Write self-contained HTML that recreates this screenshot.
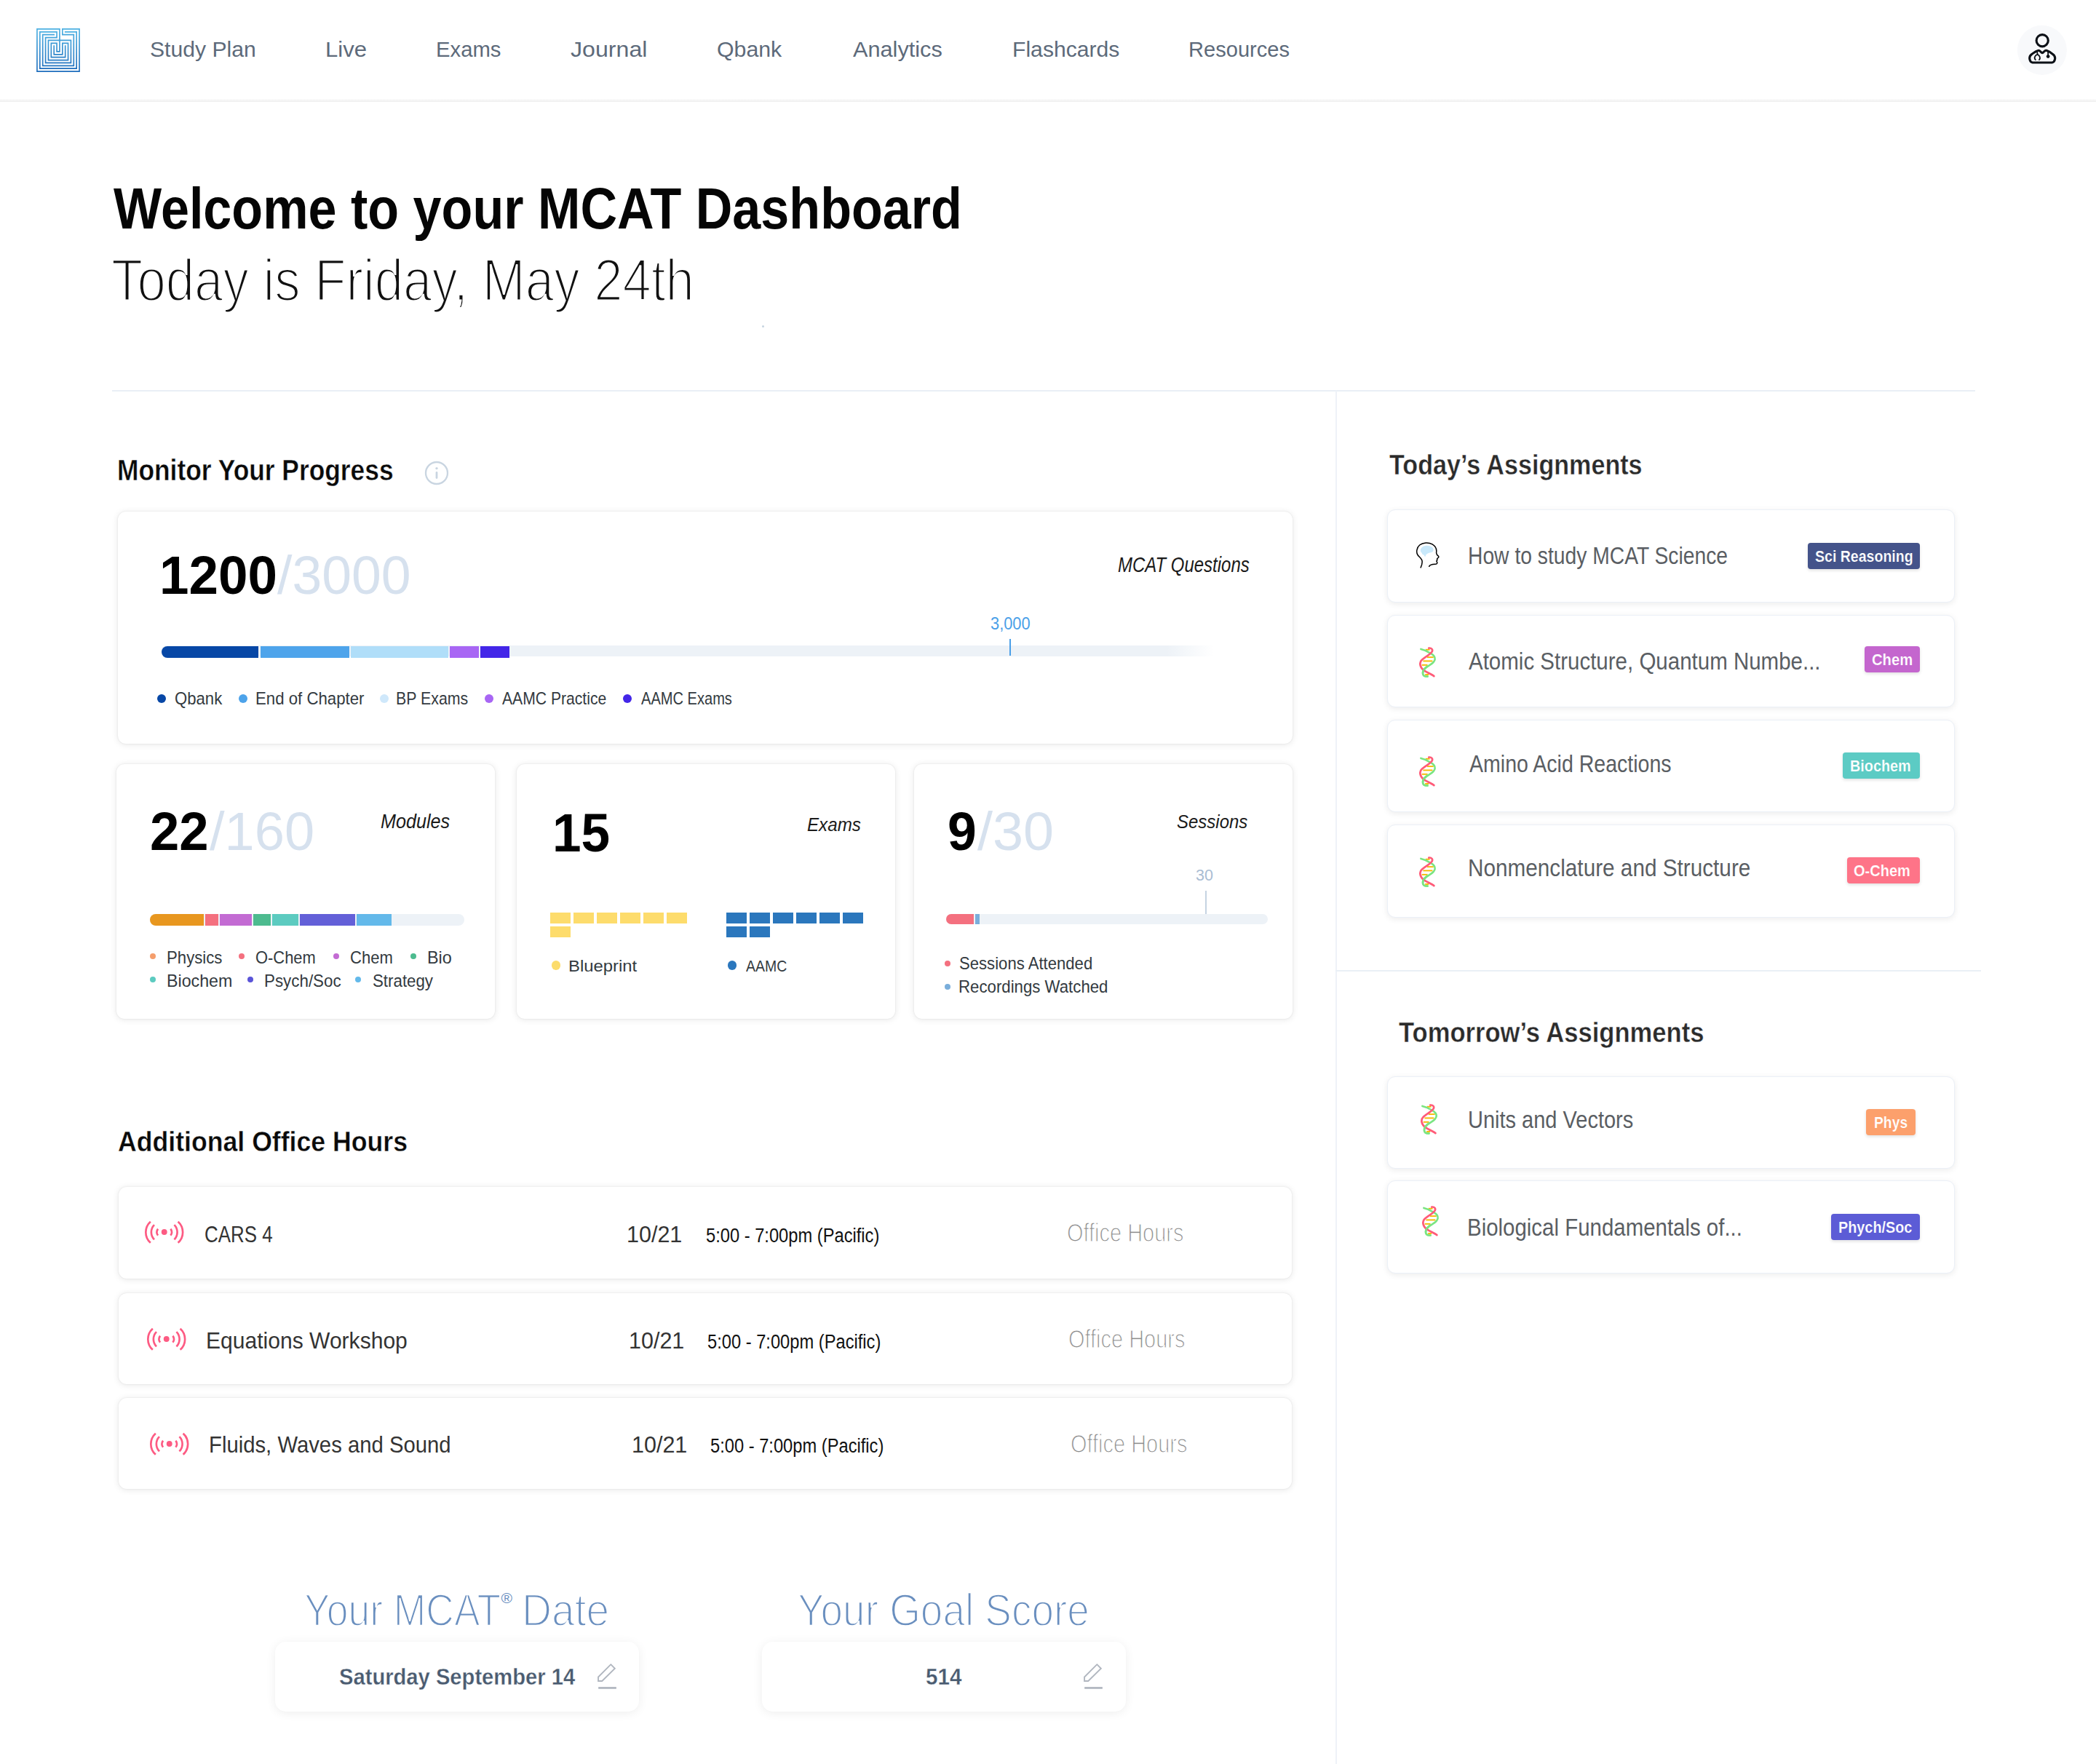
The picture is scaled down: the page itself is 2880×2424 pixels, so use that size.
<!DOCTYPE html>
<html><head><meta charset="utf-8"><title>MCAT Dashboard</title><style>
html,body{margin:0;padding:0;background:#fff;}
body{width:2880px;height:2424px;position:relative;overflow:hidden;font-family:"Liberation Sans",sans-serif;}
.t{position:absolute;white-space:nowrap;line-height:1;transform-origin:0 0;}
.lt{-webkit-text-stroke:0.036em #fff;}
.r{position:absolute;}
.card{position:absolute;background:#fff;box-shadow:0 0 2px rgba(0,0,0,0.1),0 1px 10px rgba(0,0,0,0.1);}
@media (max-width:2000px){html{zoom:0.5;}}
</style></head>
<body>
<div class="r" style="left:0.00px;top:136.00px;width:2880.00px;height:4.00px;background:linear-gradient(#fcfcfc,#eeeeee);"></div>
<div class="r" style="left:154.00px;top:536.00px;width:2560.00px;height:2.00px;background:#e9eff6;"></div>
<div class="r" style="left:1834.50px;top:537.00px;width:2.00px;height:1887.00px;background:#eef2f8;"></div>
<div class="r" style="left:1835.00px;top:1332.50px;width:887.00px;height:2.00px;background:#eaf0f6;"></div>
<div class="card" style="left:161.50px;top:702.50px;width:1614.50px;height:319.00px;border-radius:11px;"></div>
<div class="r" style="left:222.00px;top:886.50px;width:1446.00px;height:15.50px;background:linear-gradient(90deg,#edf2f7 0%,#edf2f7 95.5%,rgba(237,242,247,0) 100%);border-radius:8px 0 0 8px;"></div>
<div class="r" style="left:222.00px;top:888.00px;width:133.40px;height:16.00px;background:#0747a6;border-radius:8px 0 0 8px;"></div>
<div class="r" style="left:357.50px;top:888.00px;width:122.30px;height:16.00px;background:#4ea4eb;"></div>
<div class="r" style="left:482.00px;top:888.00px;width:134.00px;height:16.00px;background:#b0def9;"></div>
<div class="r" style="left:618.00px;top:888.00px;width:39.80px;height:16.00px;background:#a866f4;"></div>
<div class="r" style="left:660.00px;top:888.00px;width:40.00px;height:16.00px;background:#4326e8;"></div>
<div class="r" style="left:1386.80px;top:877.50px;width:2.00px;height:23.50px;background:#4a9fe8;"></div>
<div class="r" style="left:216.00px;top:954.00px;width:12px;height:12px;border-radius:50%;background:#0747a6"></div>
<div class="r" style="left:328.00px;top:954.00px;width:12px;height:12px;border-radius:50%;background:#4da3ea"></div>
<div class="r" style="left:521.80px;top:954.00px;width:12px;height:12px;border-radius:50%;background:#cfe8fb"></div>
<div class="r" style="left:666.00px;top:954.00px;width:12px;height:12px;border-radius:50%;background:#a866f4"></div>
<div class="r" style="left:856.00px;top:954.00px;width:12px;height:12px;border-radius:50%;background:#4326e8"></div>
<div class="card" style="left:160.00px;top:1050.00px;width:520.00px;height:350.00px;border-radius:11px;"></div>
<div class="card" style="left:710.00px;top:1050.00px;width:520.00px;height:350.00px;border-radius:11px;"></div>
<div class="card" style="left:1256.00px;top:1050.00px;width:520.00px;height:350.00px;border-radius:11px;"></div>
<div class="r" style="left:206.00px;top:1256.30px;width:431.50px;height:15.50px;background:#edf2f7;border-radius:8px;"></div>
<div class="r" style="left:206.00px;top:1256.30px;width:73.70px;height:15.50px;background:#e8971f;border-radius:8px 0 0 8px;"></div>
<div class="r" style="left:282.00px;top:1256.30px;width:17.80px;height:15.50px;background:#f4707f;"></div>
<div class="r" style="left:302.00px;top:1256.30px;width:43.70px;height:15.50px;background:#c36bd3;"></div>
<div class="r" style="left:348.00px;top:1256.30px;width:24.00px;height:15.50px;background:#4dbb8f;"></div>
<div class="r" style="left:374.30px;top:1256.30px;width:35.50px;height:15.50px;background:#5ccbc0;"></div>
<div class="r" style="left:412.00px;top:1256.30px;width:75.80px;height:15.50px;background:#6360d8;"></div>
<div class="r" style="left:490.30px;top:1256.30px;width:47.70px;height:15.50px;background:#63b9ea;"></div>
<div class="r" style="left:206.00px;top:1310.00px;width:8px;height:8px;border-radius:50%;background:#f59e6c"></div>
<div class="r" style="left:327.80px;top:1310.00px;width:8px;height:8px;border-radius:50%;background:#f4707f"></div>
<div class="r" style="left:458.00px;top:1310.00px;width:8px;height:8px;border-radius:50%;background:#c36bd3"></div>
<div class="r" style="left:564.00px;top:1310.00px;width:8px;height:8px;border-radius:50%;background:#4dbb8f"></div>
<div class="r" style="left:206.00px;top:1342.00px;width:8px;height:8px;border-radius:50%;background:#5ccbc0"></div>
<div class="r" style="left:339.80px;top:1342.00px;width:8px;height:8px;border-radius:50%;background:#5a54d8"></div>
<div class="r" style="left:488.00px;top:1342.00px;width:8px;height:8px;border-radius:50%;background:#63b9ea"></div>
<div class="r" style="left:756.00px;top:1254.00px;width:28.00px;height:14.60px;background:#fddc6c;"></div>
<div class="r" style="left:998.00px;top:1254.00px;width:28.00px;height:14.60px;background:#2b77bd;"></div>
<div class="r" style="left:788.00px;top:1254.00px;width:28.00px;height:14.60px;background:#fddc6c;"></div>
<div class="r" style="left:1030.00px;top:1254.00px;width:28.00px;height:14.60px;background:#2b77bd;"></div>
<div class="r" style="left:820.00px;top:1254.00px;width:28.00px;height:14.60px;background:#fddc6c;"></div>
<div class="r" style="left:1062.00px;top:1254.00px;width:28.00px;height:14.60px;background:#2b77bd;"></div>
<div class="r" style="left:852.00px;top:1254.00px;width:28.00px;height:14.60px;background:#fddc6c;"></div>
<div class="r" style="left:1094.00px;top:1254.00px;width:28.00px;height:14.60px;background:#2b77bd;"></div>
<div class="r" style="left:884.00px;top:1254.00px;width:28.00px;height:14.60px;background:#fddc6c;"></div>
<div class="r" style="left:1126.00px;top:1254.00px;width:28.00px;height:14.60px;background:#2b77bd;"></div>
<div class="r" style="left:916.00px;top:1254.00px;width:28.00px;height:14.60px;background:#fddc6c;"></div>
<div class="r" style="left:1158.00px;top:1254.00px;width:28.00px;height:14.60px;background:#2b77bd;"></div>
<div class="r" style="left:756.00px;top:1273.00px;width:28.00px;height:14.80px;background:#fddc6c;"></div>
<div class="r" style="left:998.00px;top:1273.00px;width:28.00px;height:14.80px;background:#2b77bd;"></div>
<div class="r" style="left:1030.00px;top:1273.00px;width:28.00px;height:14.80px;background:#2b77bd;"></div>
<div class="r" style="left:757.75px;top:1320.35px;width:12.5px;height:12.5px;border-radius:50%;background:#fcdc6b"></div>
<div class="r" style="left:999.75px;top:1320.35px;width:12.5px;height:12.5px;border-radius:50%;background:#2b77bd"></div>
<div class="r" style="left:1656.00px;top:1224.00px;width:2.00px;height:33.00px;background:#c5d3e2;"></div>
<div class="r" style="left:1300.00px;top:1256.30px;width:441.70px;height:13.70px;background:#edf2f7;border-radius:8px;"></div>
<div class="r" style="left:1300.00px;top:1256.30px;width:38.00px;height:13.70px;background:#f4707f;border-radius:8px 0 0 8px;"></div>
<div class="r" style="left:1339.60px;top:1256.30px;width:6.40px;height:13.70px;background:#7aaedb;"></div>
<div class="r" style="left:1298.00px;top:1320.00px;width:8px;height:8px;border-radius:50%;background:#f4707f"></div>
<div class="r" style="left:1298.00px;top:1352.00px;width:8px;height:8px;border-radius:50%;background:#7aaedb"></div>
<div class="card" style="left:162.60px;top:1630.50px;width:1612.70px;height:126.00px;border-radius:11px;"></div>
<div class="card" style="left:162.60px;top:1777.00px;width:1612.70px;height:125.40px;border-radius:11px;"></div>
<div class="card" style="left:162.60px;top:1921.30px;width:1612.70px;height:125.10px;border-radius:11px;"></div>
<div class="card" style="left:378.20px;top:2256.20px;width:500.00px;height:95.50px;border-radius:15px;box-shadow:0 2px 14px rgba(0,0,0,0.07);"></div>
<div class="card" style="left:1047.10px;top:2256.20px;width:500.00px;height:95.50px;border-radius:15px;box-shadow:0 2px 14px rgba(0,0,0,0.07);"></div>
<div class="card" style="left:1905.70px;top:700.00px;width:780.30px;height:128.00px;border-radius:11px;border:1.5px solid #ebf0f7;box-sizing:border-box;box-shadow:0 2px 8px rgba(0,0,0,0.08);"></div>
<div class="card" style="left:1905.70px;top:844.50px;width:780.30px;height:127.50px;border-radius:11px;border:1.5px solid #ebf0f7;box-sizing:border-box;box-shadow:0 2px 8px rgba(0,0,0,0.08);"></div>
<div class="card" style="left:1905.70px;top:988.50px;width:780.30px;height:127.50px;border-radius:11px;border:1.5px solid #ebf0f7;box-sizing:border-box;box-shadow:0 2px 8px rgba(0,0,0,0.08);"></div>
<div class="card" style="left:1905.70px;top:1132.50px;width:780.30px;height:128.00px;border-radius:11px;border:1.5px solid #ebf0f7;box-sizing:border-box;box-shadow:0 2px 8px rgba(0,0,0,0.08);"></div>
<div class="card" style="left:1905.70px;top:1478.50px;width:780.30px;height:127.50px;border-radius:11px;border:1.5px solid #ebf0f7;box-sizing:border-box;box-shadow:0 2px 8px rgba(0,0,0,0.08);"></div>
<div class="card" style="left:1905.70px;top:1622.00px;width:780.30px;height:128.00px;border-radius:11px;border:1.5px solid #ebf0f7;box-sizing:border-box;box-shadow:0 2px 8px rgba(0,0,0,0.08);"></div>
<div class="r" style="left:2484.20px;top:746.00px;width:153.80px;height:35.80px;background:#44538a;border-radius:4px;box-shadow:0 2px 4px rgba(0,0,0,0.12)"></div>
<div class="r" style="left:2562.00px;top:888.10px;width:75.90px;height:35.80px;background:#c466ce;border-radius:4px;box-shadow:0 2px 4px rgba(0,0,0,0.12)"></div>
<div class="r" style="left:2532.10px;top:1034.00px;width:105.80px;height:35.80px;background:#5ccbc4;border-radius:4px;box-shadow:0 2px 4px rgba(0,0,0,0.12)"></div>
<div class="r" style="left:2538.10px;top:1178.00px;width:99.80px;height:35.90px;background:#fe7488;border-radius:4px;box-shadow:0 2px 4px rgba(0,0,0,0.12)"></div>
<div class="r" style="left:2564.20px;top:1524.10px;width:67.70px;height:35.90px;background:#fca06c;border-radius:4px;box-shadow:0 2px 4px rgba(0,0,0,0.12)"></div>
<div class="r" style="left:2516.10px;top:1668.00px;width:121.70px;height:35.80px;background:#5c5cd6;border-radius:4px;box-shadow:0 2px 4px rgba(0,0,0,0.12)"></div>
<svg class="r" style="left:49px;top:37.6px" width="62" height="62" viewBox="-0.5 -0.5 16 16">
<defs><linearGradient id="lg" x1="0" y1="0" x2="0" y2="1"><stop offset="0" stop-color="#4cb0e2"/><stop offset="1" stop-color="#1c6cbc"/></linearGradient></defs>
<g fill="none" stroke="url(#lg)" stroke-width="0.42" stroke-linejoin="miter" stroke-linecap="square">
<path d="M6,2 H2 V13 H13 V2 H9 V0 H15 V15 H0 V0 H8 V8 H7 V5 H5 V10 H10 V6"/>
<path d="M10,1 H14 V14 H1 V1 H7 V3 H3 V12 H12 V4 H4 V11 H11 V5 H9 V9 H6 V6"/>
</g></svg>
<svg class="r" style="left:2760px;top:20px" width="100" height="100" viewBox="0 0 1764 1764">
<circle cx="810" cy="862" r="600" fill="#f8f9fb"/>
<g fill="none" stroke="#0d1117" stroke-width="55" stroke-linecap="round" stroke-linejoin="round">
<circle cx="815" cy="630" r="143"/>
<path d="M580 1165 H1050 C1120 1150 1160 1030 1075 965 C1025 925 970 890 925 875 C905 868 880 875 860 895 L835 920 C822 933 808 933 795 920 L770 895 C750 875 725 868 705 875 C660 890 605 925 555 965 C470 1030 510 1150 580 1165 Z"/>
</g>
<g fill="none" stroke="#0d1117" stroke-width="32" stroke-linecap="round">
<path d="M690 905 L700 965"/>
<path d="M650 1095 C610 1060 630 990 695 970 C760 990 775 1060 740 1095"/>
<path d="M955 905 V1005"/>
</g>
<circle cx="955" cy="1015" r="42" fill="#0d1117"/>
</svg>
<svg class="r" style="left:580px;top:630.3px" width="40" height="40" viewBox="0 0 40 40">
<circle cx="20" cy="20" r="15" fill="none" stroke="#c9d5e1" stroke-width="2.3"/>
<circle cx="20" cy="13.6" r="1.7" fill="#c9d5e1"/>
<line x1="20" y1="19.5" x2="20" y2="26.5" stroke="#c9d5e1" stroke-width="2.8" stroke-linecap="round"/>
</svg>
<svg class="r" style="left:190px;top:1668px" width="72" height="50" viewBox="0 0 2096 1456">
<g fill="none" stroke="#fd5b83" stroke-width="78"><path d="M490 310 A570 570 0 0 0 490 1160"/><path d="M1590 310 A570 570 0 0 1 1590 1160"/><path d="M640 440 A422 422 0 0 0 640 1030"/><path d="M1440 440 A422 422 0 0 1 1440 1030"/><path d="M790 605 A190 190 0 0 0 790 865"/><path d="M1290 605 A190 190 0 0 1 1290 865"/></g>
<circle cx="1040" cy="730" r="115" fill="#fd5b83"/></svg>
<svg class="r" style="left:192.5px;top:1814.5px" width="72" height="50" viewBox="0 0 2096 1456">
<g fill="none" stroke="#fd5b83" stroke-width="78"><path d="M490 310 A570 570 0 0 0 490 1160"/><path d="M1590 310 A570 570 0 0 1 1590 1160"/><path d="M640 440 A422 422 0 0 0 640 1030"/><path d="M1440 440 A422 422 0 0 1 1440 1030"/><path d="M790 605 A190 190 0 0 0 790 865"/><path d="M1290 605 A190 190 0 0 1 1290 865"/></g>
<circle cx="1040" cy="730" r="115" fill="#fd5b83"/></svg>
<svg class="r" style="left:196.5px;top:1959px" width="72" height="50" viewBox="0 0 2096 1456">
<g fill="none" stroke="#fd5b83" stroke-width="78"><path d="M490 310 A570 570 0 0 0 490 1160"/><path d="M1590 310 A570 570 0 0 1 1590 1160"/><path d="M640 440 A422 422 0 0 0 640 1030"/><path d="M1440 440 A422 422 0 0 1 1440 1030"/><path d="M790 605 A190 190 0 0 0 790 865"/><path d="M1290 605 A190 190 0 0 1 1290 865"/></g>
<circle cx="1040" cy="730" r="115" fill="#fd5b83"/></svg>
<svg class="r" style="left:810px;top:2278px" width="50" height="50" viewBox="0 0 1764 1764">
<path d="M425 935 L1035 325 L1230 520 L610 1130 L425 1130 Z" fill="none" stroke="#b0b6bf" stroke-width="65" stroke-linejoin="miter"/>
<rect x="430" y="1415" width="870" height="95" fill="#b0b6bf"/></svg>
<svg class="r" style="left:1478.4px;top:2278px" width="50" height="50" viewBox="0 0 1764 1764">
<path d="M425 935 L1035 325 L1230 520 L610 1130 L425 1130 Z" fill="none" stroke="#b0b6bf" stroke-width="65" stroke-linejoin="miter"/>
<rect x="430" y="1415" width="870" height="95" fill="#b0b6bf"/></svg>
<svg class="r" style="left:1935px;top:735px" width="55" height="55" viewBox="0 0 1764 1764">
<path d="M540 700 C530 600 620 500 760 480 C880 465 1000 490 1070 560 C1120 610 1120 700 1080 740 C1040 780 960 790 900 800 C850 810 800 860 770 880 L770 950 L710 950 L700 880 C650 880 600 850 600 790 C570 780 540 750 540 700 Z" fill="#c9e9fb"/>
<path d="M550 1440 C600 1330 640 1220 600 1110 C560 1010 480 970 420 890 C340 780 370 560 500 450 C640 330 900 320 1060 410 C1200 490 1260 620 1240 760 C1230 830 1260 880 1310 920 C1360 960 1350 990 1300 1020 C1270 1040 1260 1070 1280 1110 C1250 1130 1230 1160 1270 1200 C1290 1250 1260 1290 1180 1290 C1050 1290 960 1300 920 1390" fill="none" stroke="#000" stroke-width="48" stroke-linecap="round" stroke-linejoin="round"/>
</svg>
<svg class="r" style="left:1935px;top:880px" width="55" height="60" viewBox="0 0 1617 1764">
<g stroke="#f5b800" stroke-width="55"><path d="M700 375 H870"/><path d="M760 680 H1020"/><path d="M600 835 H980"/><path d="M550 995 H780"/><path d="M680 1380 H830"/></g>
<path d="M510 350 C650 380 780 430 900 520 C1180 680 1100 850 880 990 C700 1100 560 1200 590 1350 C610 1450 700 1460 780 1455" fill="none" stroke="#7ae582" stroke-width="75" stroke-linecap="round"/>
<path d="M830 310 C950 300 1010 380 950 470 C850 600 700 650 560 780 C430 900 470 1080 620 1200 C760 1300 950 1370 1040 1445" fill="none" stroke="#ff5b78" stroke-width="80" stroke-linecap="round"/>
<path d="M760 1050 C640 1130 570 1220 590 1350 C610 1450 700 1460 780 1455" fill="none" stroke="#7ae582" stroke-width="75" stroke-linecap="round"/>
</svg>
<svg class="r" style="left:1935px;top:1030.4px" width="55" height="60" viewBox="0 0 1617 1764">
<g stroke="#f5b800" stroke-width="55"><path d="M700 375 H870"/><path d="M760 680 H1020"/><path d="M600 835 H980"/><path d="M550 995 H780"/><path d="M680 1380 H830"/></g>
<path d="M510 350 C650 380 780 430 900 520 C1180 680 1100 850 880 990 C700 1100 560 1200 590 1350 C610 1450 700 1460 780 1455" fill="none" stroke="#7ae582" stroke-width="75" stroke-linecap="round"/>
<path d="M830 310 C950 300 1010 380 950 470 C850 600 700 650 560 780 C430 900 470 1080 620 1200 C760 1300 950 1370 1040 1445" fill="none" stroke="#ff5b78" stroke-width="80" stroke-linecap="round"/>
<path d="M760 1050 C640 1130 570 1220 590 1350 C610 1450 700 1460 780 1455" fill="none" stroke="#7ae582" stroke-width="75" stroke-linecap="round"/>
</svg>
<svg class="r" style="left:1935px;top:1168px" width="55" height="60" viewBox="0 0 1617 1764">
<g stroke="#f5b800" stroke-width="55"><path d="M700 375 H870"/><path d="M760 680 H1020"/><path d="M600 835 H980"/><path d="M550 995 H780"/><path d="M680 1380 H830"/></g>
<path d="M510 350 C650 380 780 430 900 520 C1180 680 1100 850 880 990 C700 1100 560 1200 590 1350 C610 1450 700 1460 780 1455" fill="none" stroke="#7ae582" stroke-width="75" stroke-linecap="round"/>
<path d="M830 310 C950 300 1010 380 950 470 C850 600 700 650 560 780 C430 900 470 1080 620 1200 C760 1300 950 1370 1040 1445" fill="none" stroke="#ff5b78" stroke-width="80" stroke-linecap="round"/>
<path d="M760 1050 C640 1130 570 1220 590 1350 C610 1450 700 1460 780 1455" fill="none" stroke="#7ae582" stroke-width="75" stroke-linecap="round"/>
</svg>
<svg class="r" style="left:1937px;top:1508.2px" width="55" height="60" viewBox="0 0 1617 1764">
<g stroke="#f5b800" stroke-width="55"><path d="M700 375 H870"/><path d="M760 680 H1020"/><path d="M600 835 H980"/><path d="M550 995 H780"/><path d="M680 1380 H830"/></g>
<path d="M510 350 C650 380 780 430 900 520 C1180 680 1100 850 880 990 C700 1100 560 1200 590 1350 C610 1450 700 1460 780 1455" fill="none" stroke="#7ae582" stroke-width="75" stroke-linecap="round"/>
<path d="M830 310 C950 300 1010 380 950 470 C850 600 700 650 560 780 C430 900 470 1080 620 1200 C760 1300 950 1370 1040 1445" fill="none" stroke="#ff5b78" stroke-width="80" stroke-linecap="round"/>
<path d="M760 1050 C640 1130 570 1220 590 1350 C610 1450 700 1460 780 1455" fill="none" stroke="#7ae582" stroke-width="75" stroke-linecap="round"/>
</svg>
<svg class="r" style="left:1939px;top:1648px" width="55" height="60" viewBox="0 0 1617 1764">
<g stroke="#f5b800" stroke-width="55"><path d="M700 375 H870"/><path d="M760 680 H1020"/><path d="M600 835 H980"/><path d="M550 995 H780"/><path d="M680 1380 H830"/></g>
<path d="M510 350 C650 380 780 430 900 520 C1180 680 1100 850 880 990 C700 1100 560 1200 590 1350 C610 1450 700 1460 780 1455" fill="none" stroke="#7ae582" stroke-width="75" stroke-linecap="round"/>
<path d="M830 310 C950 300 1010 380 950 470 C850 600 700 650 560 780 C430 900 470 1080 620 1200 C760 1300 950 1370 1040 1445" fill="none" stroke="#ff5b78" stroke-width="80" stroke-linecap="round"/>
<path d="M760 1050 C640 1130 570 1220 590 1350 C610 1450 700 1460 780 1455" fill="none" stroke="#7ae582" stroke-width="75" stroke-linecap="round"/>
</svg>
<div class="t" style="left:206.24px;top:53.35px;font-size:29.94px;color:#5d6a7a;transform:scaleX(1.0070);">Study Plan</div>
<div class="t" style="left:446.92px;top:53.35px;font-size:29.94px;color:#5d6a7a;transform:scaleX(1.0385);">Live</div>
<div class="t" style="left:598.80px;top:53.35px;font-size:29.94px;color:#5d6a7a;transform:scaleX(0.9773);">Exams</div>
<div class="t" style="left:784.18px;top:53.35px;font-size:29.94px;color:#5d6a7a;transform:scaleX(1.0737);">Journal</div>
<div class="t" style="left:984.74px;top:53.35px;font-size:29.94px;color:#5d6a7a;transform:scaleX(1.0115);">Qbank</div>
<div class="t" style="left:1172.00px;top:53.35px;font-size:29.94px;color:#5d6a7a;transform:scaleX(1.0252);">Analytics</div>
<div class="t" style="left:1390.74px;top:53.35px;font-size:29.94px;color:#5d6a7a;transform:scaleX(1.0070);">Flashcards</div>
<div class="t" style="left:1633.06px;top:53.35px;font-size:29.94px;color:#5d6a7a;transform:scaleX(0.9714);">Resources</div>
<div class="t" style="left:156.00px;top:247.44px;font-size:79.22px;color:#050505;font-weight:700;transform:scaleX(0.8849);">Welcome to your MCAT Dashboard</div>
<div class="t lt" style="left:153.00px;top:344.27px;font-size:81.75px;color:#111;transform:scaleX(0.8655);">Today is Friday, May 24th</div>
<div class="t" style="left:161.28px;top:627.24px;font-size:40.12px;color:#0a0a0a;font-weight:700;transform:scaleX(0.8809);-webkit-text-stroke:0.01em #fff;">Monitor Your Progress</div>
<div class="t" style="left:218.66px;top:753.14px;font-size:74.85px;color:#000;font-weight:700;transform:scaleX(0.9728);">1200</div>
<div class="t" style="left:380.70px;top:753.14px;font-size:74.85px;color:#d6e1ee;transform:scaleX(0.9800);">/3000</div>
<div class="t" style="left:1535.68px;top:761.89px;font-size:29.07px;color:#1a1a1a;font-style:italic;transform:scaleX(0.8249);">MCAT Questions</div>
<div class="t" style="left:1360.67px;top:845.57px;font-size:23.55px;color:#4a9fe8;transform:scaleX(0.9263);">3,000</div>
<div class="t" style="left:239.60px;top:947.58px;font-size:24.71px;color:#333a40;transform:scaleX(0.8958);">Qbank</div>
<div class="t" style="left:351.20px;top:947.58px;font-size:24.71px;color:#333a40;transform:scaleX(0.8994);">End of Chapter</div>
<div class="t" style="left:544.17px;top:947.58px;font-size:24.71px;color:#333a40;transform:scaleX(0.8634);">BP Exams</div>
<div class="t" style="left:689.50px;top:947.58px;font-size:24.71px;color:#333a40;transform:scaleX(0.8554);">AAMC Practice</div>
<div class="t" style="left:880.60px;top:947.58px;font-size:24.71px;color:#333a40;transform:scaleX(0.8124);">AAMC Exams</div>
<div class="t" style="left:206.39px;top:1105.14px;font-size:74.85px;color:#000;font-weight:700;transform:scaleX(0.9692);">22</div>
<div class="t" style="left:288.20px;top:1105.14px;font-size:74.85px;color:#d6e1ee;transform:scaleX(0.9888);">/160</div>
<div class="t" style="left:522.77px;top:1115.49px;font-size:27.18px;color:#1a1a1a;font-style:italic;transform:scaleX(0.9267);">Modules</div>
<div class="t" style="left:229.09px;top:1304.81px;font-size:23.26px;color:#333a40;transform:scaleX(0.9545);">Physics</div>
<div class="t" style="left:351.26px;top:1304.81px;font-size:23.26px;color:#333a40;transform:scaleX(0.9424);">O-Chem</div>
<div class="t" style="left:481.35px;top:1304.81px;font-size:23.26px;color:#333a40;transform:scaleX(0.9483);">Chem</div>
<div class="t" style="left:586.89px;top:1304.81px;font-size:23.26px;color:#333a40;transform:scaleX(1.0065);">Bio</div>
<div class="t" style="left:228.80px;top:1336.81px;font-size:23.26px;color:#333a40;transform:scaleX(0.9989);">Biochem</div>
<div class="t" style="left:362.88px;top:1336.81px;font-size:23.26px;color:#333a40;transform:scaleX(0.9617);">Psych/Soc</div>
<div class="t" style="left:511.54px;top:1336.81px;font-size:23.26px;color:#333a40;transform:scaleX(0.9588);">Strategy</div>
<div class="t" style="left:759.28px;top:1108.00px;font-size:73.84px;color:#000;font-weight:700;transform:scaleX(0.9640);">15</div>
<div class="t" style="left:1109.49px;top:1119.61px;font-size:26.45px;color:#1a1a1a;font-style:italic;transform:scaleX(0.9139);">Exams</div>
<div class="t" style="left:780.91px;top:1315.68px;font-size:22.82px;color:#333a40;transform:scaleX(1.0455);">Blueprint</div>
<div class="t" style="left:1024.50px;top:1315.68px;font-size:22.82px;color:#333a40;transform:scaleX(0.8538);">AAMC</div>
<div class="t" style="left:1302.18px;top:1105.14px;font-size:74.85px;color:#000;font-weight:700;transform:scaleX(0.9556);">9</div>
<div class="t" style="left:1343.00px;top:1105.14px;font-size:74.85px;color:#d6e1ee;transform:scaleX(1.0099);">/30</div>
<div class="t" style="left:1617.38px;top:1115.85px;font-size:26.16px;color:#1a1a1a;font-style:italic;transform:scaleX(0.9173);">Sessions</div>
<div class="t" style="left:1643.43px;top:1192.18px;font-size:22.24px;color:#a9bdd3;transform:scaleX(0.9652);">30</div>
<div class="t" style="left:1318.45px;top:1312.81px;font-size:23.26px;color:#333a40;transform:scaleX(0.9513);">Sessions Attended</div>
<div class="t" style="left:1317.49px;top:1344.81px;font-size:23.26px;color:#333a40;transform:scaleX(0.9559);">Recordings Watched</div>
<div class="t" style="left:161.71px;top:1548.99px;font-size:39.23px;color:#0a0a0a;font-weight:700;transform:scaleX(0.9088);-webkit-text-stroke:0.01em #fff;">Additional Office Hours</div>
<div class="t" style="left:281.37px;top:1680.67px;font-size:31.10px;color:#333;transform:scaleX(0.8327);">CARS 4</div>
<div class="t" style="left:861.24px;top:1680.67px;font-size:31.10px;color:#333;transform:scaleX(0.9811);">10/21</div>
<div class="t" style="left:969.64px;top:1683.62px;font-size:27.62px;color:#111;transform:scaleX(0.8582);">5:00 - 7:00pm (Pacific)</div>
<div class="t lt" style="left:1465.70px;top:1677.41px;font-size:34.51px;color:#8c8c8c;transform:scaleX(0.8391);">Office Hours</div>
<div class="t" style="left:282.77px;top:1826.67px;font-size:31.10px;color:#333;transform:scaleX(0.9668);">Equations Workshop</div>
<div class="t" style="left:863.74px;top:1826.67px;font-size:31.10px;color:#333;transform:scaleX(0.9811);">10/21</div>
<div class="t" style="left:971.64px;top:1829.62px;font-size:27.62px;color:#111;transform:scaleX(0.8582);">5:00 - 7:00pm (Pacific)</div>
<div class="t lt" style="left:1467.70px;top:1823.41px;font-size:34.51px;color:#8c8c8c;transform:scaleX(0.8391);">Office Hours</div>
<div class="t" style="left:286.52px;top:1970.17px;font-size:31.10px;color:#333;transform:scaleX(0.9418);">Fluids, Waves and Sound</div>
<div class="t" style="left:867.74px;top:1970.17px;font-size:31.10px;color:#333;transform:scaleX(0.9811);">10/21</div>
<div class="t" style="left:975.64px;top:1973.12px;font-size:27.62px;color:#111;transform:scaleX(0.8582);">5:00 - 7:00pm (Pacific)</div>
<div class="t lt" style="left:1471.20px;top:1967.41px;font-size:34.51px;color:#8c8c8c;transform:scaleX(0.8391);">Office Hours</div>
<div class="t lt" style="left:417.55px;top:2181.39px;font-size:63.50px;color:#6a8fbf;transform:scaleX(0.8416);">Your MCAT</div>
<div class="t lt" style="left:717.10px;top:2181.39px;font-size:63.50px;color:#6a8fbf;transform:scaleX(0.8956);">Date</div>
<div class="t" style="left:465.73px;top:2288.56px;font-size:31.42px;color:#4a5b70;font-weight:700;transform:scaleX(0.9287);-webkit-text-stroke:0.01em #fff;">Saturday September 14</div>
<div class="t lt" style="left:1095.88px;top:2181.39px;font-size:63.50px;color:#6a8fbf;transform:scaleX(0.8644);">Your Goal Score</div>
<div class="t" style="left:1271.51px;top:2288.56px;font-size:31.42px;color:#4a5b70;font-weight:700;transform:scaleX(0.9431);-webkit-text-stroke:0.01em #fff;">514</div>
<div class="t" style="left:1909.43px;top:619.73px;font-size:38.35px;color:#2b2b2b;font-weight:700;transform:scaleX(0.8901);-webkit-text-stroke:0.01em #fff;">Today’s Assignments</div>
<div class="t" style="left:1921.53px;top:1399.73px;font-size:38.35px;color:#2b2b2b;font-weight:700;transform:scaleX(0.9020);-webkit-text-stroke:0.01em #fff;">Tomorrow’s Assignments</div>
<div class="t" style="left:2016.61px;top:747.82px;font-size:32.70px;color:#5a5e63;transform:scaleX(0.8645);">How to study MCAT Science</div>
<div class="t" style="left:2018.30px;top:893.32px;font-size:32.70px;color:#5a5e63;transform:scaleX(0.9023);">Atomic Structure, Quantum Numbe...</div>
<div class="t" style="left:2019.00px;top:1034.32px;font-size:32.70px;color:#5a5e63;transform:scaleX(0.8730);">Amino Acid Reactions</div>
<div class="t" style="left:2017.17px;top:1176.82px;font-size:32.70px;color:#5a5e63;transform:scaleX(0.9095);">Nonmenclature and Structure</div>
<div class="t" style="left:2016.53px;top:1523.32px;font-size:32.70px;color:#5a5e63;transform:scaleX(0.8870);">Units and Vectors</div>
<div class="t" style="left:2016.40px;top:1671.32px;font-size:32.70px;color:#5a5e63;transform:scaleX(0.9005);">Biological Fundamentals of...</div>
<div class="t" style="left:2493.61px;top:754.13px;font-size:21.83px;color:#fff;font-weight:700;transform:scaleX(0.8952);-webkit-text-stroke:0.01em #44538a;">Sci Reasoning</div>
<div class="t" style="left:2571.67px;top:895.63px;font-size:21.83px;color:#fff;font-weight:700;transform:scaleX(0.9276);-webkit-text-stroke:0.01em #c466ce;">Chem</div>
<div class="t" style="left:2542.49px;top:1041.63px;font-size:21.83px;color:#fff;font-weight:700;transform:scaleX(0.9078);-webkit-text-stroke:0.01em #5ccbc4;">Biochem</div>
<div class="t" style="left:2547.48px;top:1185.63px;font-size:21.83px;color:#fff;font-weight:700;transform:scaleX(0.9181);-webkit-text-stroke:0.01em #fe7488;">O-Chem</div>
<div class="t" style="left:2574.52px;top:1532.13px;font-size:21.83px;color:#fff;font-weight:700;transform:scaleX(0.8839);-webkit-text-stroke:0.01em #fca06c;">Phys</div>
<div class="t" style="left:2526.39px;top:1675.63px;font-size:21.83px;color:#fff;font-weight:700;transform:scaleX(0.9082);-webkit-text-stroke:0.01em #5c5cd6;">Phych/Soc</div>
<div class="r" style="left:1046.5px;top:446.5px;width:3px;height:3px;border-radius:50%;background:#c5d3e0"></div>
<div class="t" style="left:688.5px;top:2185px;font-size:21px;color:#6a8fbf">&#174;</div>
</body></html>
